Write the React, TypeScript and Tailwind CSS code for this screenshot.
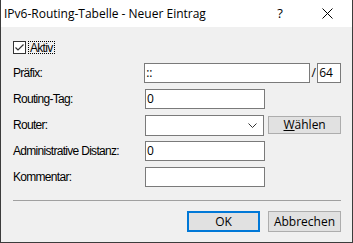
import React from 'react';

const labelFont = { fontFamily: '"Liberation Sans", Arial, sans-serif' };

const Field: React.FC<{ value?: string; className?: string }> = ({ value = '', className = '' }) => (
  <div
    className={`h-[20px] border border-[#7a7a7a] bg-white flex items-center px-[1px] text-[12px] text-black ${className}`}
  >
    {value}
  </div>
);

const Label: React.FC<{ children: React.ReactNode }> = ({ children }) => (
  <div className="w-[132px] h-[20px] flex items-center text-[12px] tracking-[-0.7px] text-black" style={labelFont}>
    {children}
  </div>
);

const App: React.FC = () => {
  return (
    <div
      className="w-[353px] h-[243px] flex flex-col bg-[#f0f0f0] border-x border-b border-[#3c3c3c] overflow-hidden select-none"
      style={{ fontFamily: '"Open Sans", "Noto Sans", sans-serif' }}
    >
      {/* title bar */}
      <div className="h-[27px] bg-white flex items-center shrink-0">
        <span className="pl-[3px] text-[12px] text-black">IPv6-Routing-Tabelle - Neuer Eintrag</span>
        <span className="ml-auto w-[20px] text-center text-[13px] text-black">?</span>
        <span className="w-[46px] flex justify-center ml-[14px] mr-[2px]">
          <svg width="11" height="11" viewBox="0 0 11 11">
            <path d="M0.5 0.5 L10.5 10.5 M10.5 0.5 L0.5 10.5" stroke="#000" strokeWidth="1" fill="none" />
          </svg>
        </span>
      </div>

      <div className="flex-1 flex flex-col pl-[12px] pr-[11px]">
        {/* Aktiv */}
        <div className="mt-[14px] h-[13px] flex items-center">
          <div className="w-[13px] h-[13px] border border-[#333] bg-white flex items-center justify-center">
            <svg width="11" height="11" viewBox="0 0 11 11">
              <path d="M1.5 5.5 L4 8 L9.5 2.5" stroke="#333" strokeWidth="1.2" fill="none" />
            </svg>
          </div>
          <div
            className="ml-[2px] h-[13px] px-[1px] border border-dotted border-black flex items-center text-[12px] tracking-[-0.7px] text-black"
            style={labelFont}
          >
            Aktiv
          </div>
        </div>

        <div className="mt-[9px] flex flex-col">
          <div className="h-[26px] flex items-start">
            <Label>Präfix:</Label>
            <Field value="::" className="w-[167px]" />
            <span className="w-[7px] text-center text-[12px] text-black leading-[20px]">/</span>
            <Field value="64" className="w-[24px]" />
          </div>
          <div className="h-[26px] flex items-start">
            <Label>Routing-Tag:</Label>
            <Field value="0" className="w-[120px]" />
          </div>
          <div className="h-[26px] flex items-start">
            <Label>Router:</Label>
            <div className="w-[120px] h-[21px] border border-[#7a7a7a] bg-white flex items-center justify-end pr-[6px]">
              <svg width="9" height="5" viewBox="0 0 9 5">
                <path d="M0.5 0.5 L4.5 4.5 L8.5 0.5" stroke="#333" strokeWidth="1" fill="none" />
              </svg>
            </div>
            <button className="ml-[4px] mt-[1px] w-[73px] h-[18px] bg-[#e1e1e1] border border-[#adadad] text-[12px] text-black flex items-center justify-center">
              <span>
                <span className="underline">W</span>ählen
              </span>
            </button>
          </div>
          <div className="h-[26px] flex items-start">
            <Label>Administrative Distanz:</Label>
            <Field value="0" className="w-[120px]" />
          </div>
          <div className="h-[26px] flex items-start">
            <Label>Kommentar:</Label>
            <Field className="w-[120px]" />
          </div>
        </div>

        <div className="mt-[7px] h-[1px] bg-[#a0a0a0]" />

        <div className="mt-[10px] flex justify-end gap-[8px]">
          <button className="w-[73px] h-[21px] bg-[#e1e1e1] border-2 border-[#0078d7] text-[12px] text-black">
            OK
          </button>
          <button className="w-[73px] h-[21px] bg-[#e1e1e1] border border-[#adadad] text-[12px] text-black">
            Abbrechen
          </button>
        </div>
      </div>
    </div>
  );
};

export default App;
